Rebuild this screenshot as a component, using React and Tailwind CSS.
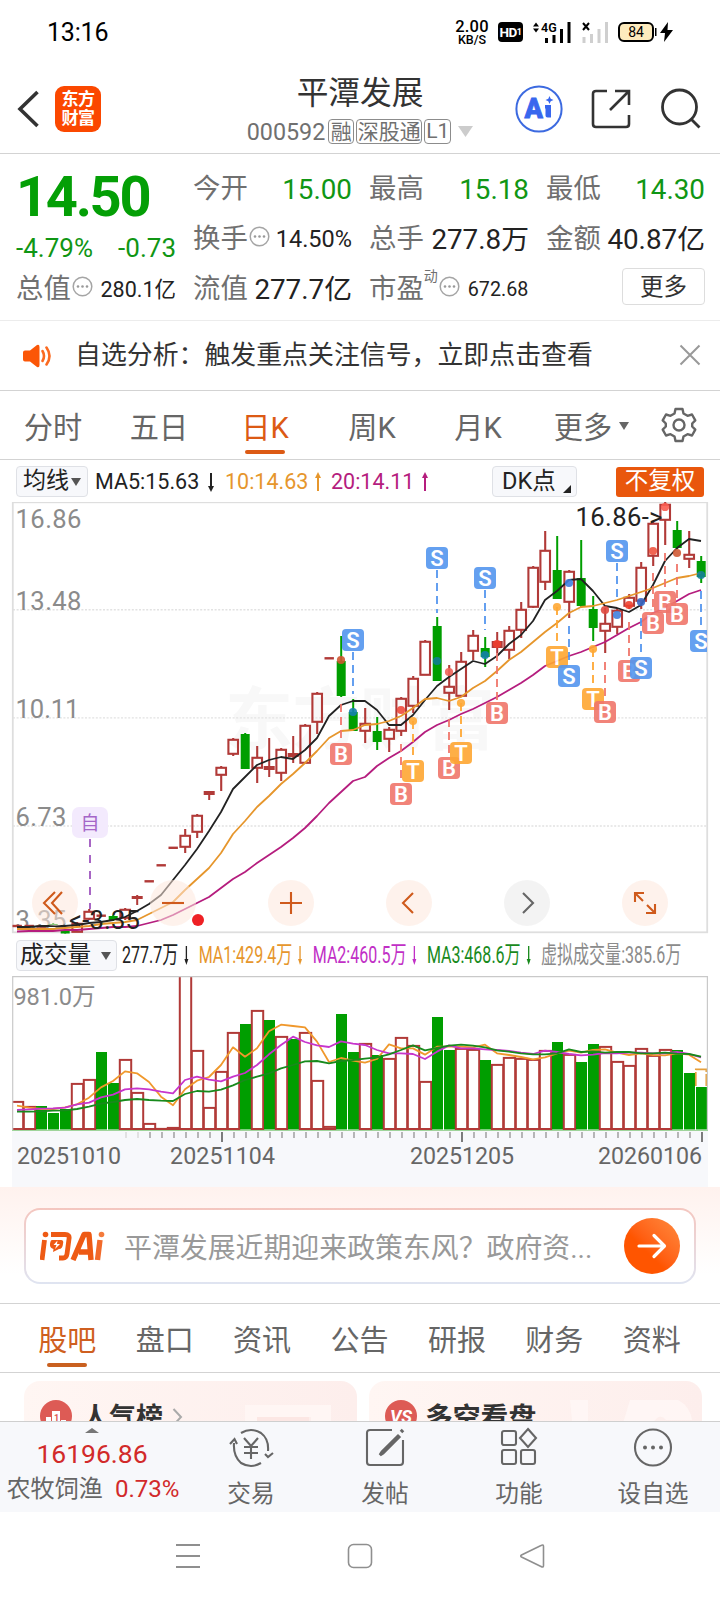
const FONT = "font-[Roboto,'Noto_Sans_CJK_SC',sans-serif]";

const UP = "#b13a38";
const DOWN = "#009e00";

// [kind, body top, body bottom, wick top, wick bottom]
// r: hollow red, f: filled red, g: green, d: flat dash
const CANDLES = [
  ["d", 926], ["d", 926], ["d", 926.5], ["g", 924, 927, 923, 927], ["g", 931, 933.5, 930, 933.5],
  ["r", 923, 932, 922, 932], ["r", 911, 919, 909, 920], ["d", 915.7], ["g", 916, 920, 915, 921], ["r", 909, 918, 908, 920],
  ["f", 896, 899, 895, 905], ["d", 881.3], ["d", 865.3], ["d", 847.8], ["r", 835, 847, 829, 853],
  ["r", 815, 832, 814, 838], ["f", 791, 795, 791, 800], ["r", 767, 775, 766, 791], ["r", 739, 754, 738, 756], ["g", 734, 769, 733, 769],
  ["r", 757, 768, 746, 783], ["f", 766, 770, 738, 777], ["r", 749, 773, 748, 781], ["f", 753, 757, 736, 763], ["r", 725, 763, 724, 763],
  ["r", 693, 722, 692, 734], ["d", 658.3], ["g", 661, 696, 636, 697], ["g", 712, 731, 699, 731], ["r", 723, 731, 708, 743],
  ["g", 731, 742, 717, 750], ["r", 729, 739, 727, 752], ["r", 698, 731, 697, 736], ["r", 678, 706, 676, 713], ["r", 641, 675, 640, 675],
  ["g", 626, 681, 617, 681], ["r", 686, 693, 665, 710], ["r", 661, 696, 652, 697], ["r", 635, 651, 630, 660], ["g", 648, 657, 637, 667],
  ["f", 641, 648, 632, 653], ["r", 630, 650, 626, 659], ["r", 609, 630, 602, 638], ["r", 567, 607, 566, 608], ["r", 550, 582, 531, 590],
  ["g", 570, 599, 536, 599], ["r", 571, 602, 570, 618], ["g", 578, 606, 540, 608], ["g", 609, 628, 596, 641], ["r", 623, 631, 608, 653],
  ["r", 610, 627, 609, 634], ["r", 597, 606, 594, 609], ["r", 567, 601, 562, 609], ["r", 523, 556, 522, 566], ["r", 504, 520, 502, 545],
  ["g", 530, 548, 521, 549], ["r", 554, 559, 531, 568], ["g", 561, 577, 556, 583],
];

const MA5 = [927, 927, 926, 926, 926, 925, 923, 922, 920, 917, 911, 904, 895, 880, 865, 849, 831, 812, 789, 777, 765, 760, 757, 759, 750, 738, 716, 705, 701, 701, 710, 725, 725, 715, 700, 686, 677, 669, 661, 664, 656, 644, 635, 621, 600, 591, 580, 579, 591, 606, 608, 612, 605, 585, 561, 548, 539, 541];
const MA10 = [929, 929, 929, 929, 928, 927, 926, 924, 923, 922, 920, 914, 908, 902, 890, 879, 868, 853, 834, 821, 807, 796, 784, 774, 763, 751, 738, 731, 730, 725, 724, 721, 716, 708, 699, 698, 701, 697, 688, 681, 671, 660, 652, 642, 632, 623, 613, 607, 606, 603, 600, 596, 592, 588, 583, 578, 576, 573];
const MA20 = [931.5, 931, 931, 931, 930, 930, 929, 928, 927, 927, 926, 923, 920, 915, 909, 903, 897, 888, 879, 872, 863, 855, 847, 838, 828, 816, 803, 792, 781, 777, 766, 758, 751, 742, 732, 725, 720, 714, 709, 703, 697, 690, 683, 675, 666, 661, 656, 652, 647, 642, 635, 628, 622, 613, 608, 601, 594, 590];

// [x, y, letter]
const BADGES = [
  [353, 640, "S"], [341, 754, "B"], [401, 794, "B"], [413, 771, "T"], [437, 558, "S"], [449, 768, "B"], [461, 753, "T"],
  [485, 578, "S"], [497, 713, "B"], [557, 657, "T"], [569, 676, "S"], [593, 699, "T"], [605, 712, "B"], [617, 551, "S"],
  [629, 671, "B"], [641, 668, "S"], [665, 602, "B"], [653, 623, "B"], [677, 614, "B"], [701, 641, "S"],
];
const BADGE_FILL = { S: "#5496ef", B: "#f0766b", T: "#fea733" };

// [x, y1, y2, letter]
const LINKS = [
  [353, 652, 694, "S"], [341, 704, 742, "B"], [401, 744, 782, "B"], [413, 721, 759, "T"], [437, 570, 613, "S"],
  [449, 719, 756, "B"], [461, 703, 742, "T"], [485, 590, 630, "S"], [497, 653, 701, "B"], [557, 607, 645, "T"],
  [569, 626, 664, "S"], [593, 649, 687, "T"], [605, 662, 700, "B"], [617, 563, 601, "S"], [629, 622, 660, "B"],
  [641, 618, 656, "S"], [653, 573, 611, "B"], [665, 553, 590, "B"], [677, 564, 602, "B"], [701, 591, 629, "S"],
];

const DOTS = [
  [341, 660, "#cf5630"], [353, 712, "#157fae"], [401, 710, "#f04a3c"], [413, 721, "#fea733"], [437, 661, "#0f7e92"],
  [449, 672, "#f0645a"], [461, 703, "#fea733"], [485, 655, "#1380a8"], [497, 644, "#f0402f"], [557, 607, "#fea733"],
  [569, 583, "#3f7fe0"], [593, 649, "#fea733"], [605, 610, "#e04a40"], [617, 615, "#4080dd"], [629, 605, "#f0402f"],
  [641, 602, "#3a68c8"], [653, 551, "#f0543f"], [665, 507, "#fb5c50"], [677, 553, "#d05a35"], [701, 575, "#157f98"],
];

// [colour, top of the bar]
const VOLUMES = [
  ["r", 1101], ["r", 1106], ["g", 1106], ["g", 1113], ["g", 1109], ["r", 1083], ["r", 1079], ["g", 1052], ["g", 1083], ["r", 1059],
  ["r", 1092], ["r", 1123], ["r", 1128], ["r", 1127], ["r", 960], ["r", 1050], ["r", 1107], ["r", 1071], ["r", 1032], ["g", 1024],
  ["r", 1010], ["g", 1020], ["r", 1036], ["g", 1039], ["r", 1032], ["r", 1080], ["r", 1126], ["g", 1014], ["g", 1052], ["r", 1043],
  ["g", 1055], ["r", 1058], ["r", 1037], ["r", 1045], ["r", 1081], ["g", 1017], ["g", 1050], ["r", 1048], ["r", 1049], ["g", 1060],
  ["r", 1064], ["r", 1057], ["r", 1058], ["r", 1059], ["r", 1050], ["g", 1042], ["r", 1054], ["g", 1062], ["g", 1044], ["r", 1046],
  ["r", 1061], ["r", 1065], ["r", 1048], ["r", 1055], ["r", 1049], ["g", 1050], ["g", 1073], ["g", 1087],
];
const VMA1 = [527, 533, 537, 537, 532, 523, 503, 472, 453, 424, 430, 456, 500, 526, 478, 452, 441, 405, 352, 380, 355, 304, 284, 288, 292, 335, 396, 384, 392, 398, 387, 343, 355, 355, 374, 350, 350, 350, 352, 344, 370, 375, 381, 388, 382, 370, 362, 368, 360, 358, 368, 375, 370, 375, 376, 370, 374, 397];
const VMA2 = [540, 538, 536, 535, 533, 523, 518, 502, 494, 478, 475, 478, 485, 490, 450, 440, 449, 454, 440, 429, 405, 373, 345, 320, 336, 346, 351, 334, 341, 345, 360, 370, 370, 372, 387, 365, 346, 355, 355, 358, 360, 363, 368, 372, 362, 366, 372, 376, 374, 369, 370, 368, 368, 370, 370, 366, 372, 382];
const VMA3 = [545, 545, 544, 542, 541, 537, 530, 521, 516, 510, 507, 510, 512, 513, 492, 483, 485, 479, 466, 450, 440, 430, 415, 405, 394, 393, 400, 393, 390, 386, 382, 373, 360, 346, 361, 354, 347, 344, 347, 352, 361, 365, 370, 373, 373, 370, 358, 366, 364, 368, 366, 366, 370, 370, 368, 371, 372, 380];

const xAt = (i) => 17 + i * 12;
const toPoints = (ys) => ys.map((y, i) => `${xAt(i)},${y}`).join(" ");
const toVolPoints = (ys) => toPoints(ys.map((y) => 930 + y / 3));

function Candle({ i, data }) {
  const [kind, top, bottom, high, low] = data;
  const x = xAt(i) + 0.2;
  if (kind === "d") return <rect x={x - 4.7} y={top - 1.2} width="9.4" height="2.4" fill={UP} />;
  const color = kind === "g" ? DOWN : UP;
  if (kind === "r") {
    return (
      <g stroke={color} strokeWidth="2.1" fill="none">
        <path d={`M${x} ${high}V${top}M${x} ${bottom}V${low}`} />
        <rect x={x - 4.8} y={top + 0.8} width="9.6" height={Math.max(bottom - top - 1, 2)} />
      </g>
    );
  }
  return (
    <g fill={color}>
      <rect x={x - 1} y={high} width="2" height={low - high} />
      <rect x={kind === "g" ? x - 4.5 : x - 5.5} y={top} width={kind === "g" ? 9 : 11} height={bottom - top} />
    </g>
  );
}

function PriceChart() {
  return (
    <svg className="block h-[432px] w-full" viewBox="0 502 720 432">
      <text x="225" y="744" textLength="270" fill="#f8f8f8" fontSize="68" fontWeight="700">东方财富</text>
      <g stroke="#e2e2e2" strokeWidth="1.4" strokeDasharray="2 1.6">
        <path d="M13 609.7H707M13 717.9H707M13 826H707" />
      </g>
      <rect x="12.8" y="502.3" width="694.4" height="430" fill="none" stroke="#dedede" strokeWidth="1.8" />
      <g fill="#8b8b8b" fontSize="25.6">
        <text x="15.5" y="528" textLength="66">16.86</text>
        <text x="15.5" y="610" textLength="66">13.48</text>
        <text x="15.5" y="718" textLength="64">10.11</text>
        <text x="15.5" y="826" textLength="51">6.73</text>
        <text x="15.5" y="928.5" textLength="51">3.35</text>
      </g>
      {CANDLES.map((c, i) => <Candle key={i} i={i} data={c} />)}
      <g fill="none" strokeWidth="1.8" strokeLinejoin="round">
        <polyline points={toPoints(MA5)} stroke="#222" />
        <polyline points={toPoints(MA10)} stroke="#e6962c" />
        <polyline points={toPoints(MA20)} stroke="#b51d7e" />
      </g>
      {LINKS.map(([x, y1, y2, l], i) => (
        <path key={i} d={`M${x} ${y1}V${y2}`} stroke={BADGE_FILL[l]} strokeWidth="1.8" strokeDasharray="8 5" />
      ))}
      {DOTS.map(([x, y, c], i) => <circle key={i} cx={x} cy={y} r="4.1" fill={c} opacity="0.9" />)}
      {BADGES.map(([x, y, l], i) => (
        <g key={i} opacity="0.9">
          <path
            d={x > 700 ? "M694 630H707V652H694Q690 652 690 648V634Q690 630 694 630Z" : `M${x - 7} ${y - 11}h14q4 0 4 4v14q0 4-4 4h-14q-4 0-4-4v-14q0-4 4-4Z`}
            fill={BADGE_FILL[l]}
          />
          <text x={x} y={y + 7.8} textAnchor="middle" fontSize="22" fontWeight="600" fill="#fff">{l}</text>
        </g>
      ))}
      <path d="M90 839V909" stroke="#a765c4" strokeWidth="2" strokeDasharray="8 8" />
      <rect x="72" y="807" width="36" height="31" rx="7" fill="#f3eafd" />
      <text x="90" y="830" textAnchor="middle" fontSize="19" fill="#a566c8">自</text>
      <g fill="#222" fontSize="25.6">
        <text x="69" y="928.5" textLength="71">&lt;-3.35</text>
        <text x="575.5" y="526" textLength="87">16.86-&gt;</text>
      </g>
      <circle cx="198" cy="920" r="6" fill="#ee2024" />
    </svg>
  );
}

function VolumeChart() {
  return (
    <svg className="block h-[155px] w-full" viewBox="0 976 720 155">
      <text x="13.5" y="1005" fontSize="23.6" fill="#8b8b8b" textLength="82">981.0万</text>
      {VOLUMES.map(([kind, top], i) =>
        kind === "g" ? (
          <rect key={i} x={xAt(i) - 5} y={top} width="11" height={1129.5 - top} fill={DOWN} />
        ) : (
          <rect key={i} x={xAt(i) - 5.2} y={top + 0.9} width="11.4" height={1129 - top - 0.9} fill="none" stroke={UP} strokeWidth="2" />
        )
      )}
      <path d="M695.8 1086V1069.3H706.3V1086" fill="none" stroke="#e6a03c" strokeWidth="1.7" strokeDasharray="14 2" />
      <g fill="none" strokeWidth="1.8" strokeLinejoin="round">
        <polyline points={toVolPoints(VMA1)} stroke="#f0982c" />
        <polyline points={toVolPoints(VMA2)} stroke="#c735cc" />
        <polyline points={toVolPoints(VMA3)} stroke="#188a1c" />
      </g>
      <rect x="0" y="970" width="12" height="165" fill="#fff" />
      <path d="M12.7 1130V976.6H707.4V1130" fill="none" stroke="#c9c9c9" strokeWidth="1.2" />
      <path d="M12 1130.5H708" stroke="#9fd49b" strokeWidth="1" />
    </svg>
  );
}

function TimeAxis() {
  const ticks = Array.from({ length: 49 }, (_, k) => 126 + k * 12);
  return (
    <svg className="block h-[56px] w-full bg-white" viewBox="0 1131 720 56">
      <rect x="12" y="1131" width="696" height="56" fill="#f7f8fb" />
      {ticks.map((x, k) => {
        const major = (k - 8) % 20 === 0;
        return <path key={x} d={`M${x} 1132V${major ? 1142 : 1138}`} stroke={major ? "#666" : k < 2 ? "#ddd" : "#aaa"} strokeWidth="1.7" />;
      })}
      <g fill="#666" fontSize="23.2">
        <text x="17" y="1164" textLength="104">20251010</text>
        <text x="170" y="1164" textLength="105">20251104</text>
        <text x="410" y="1164" textLength="104">20251205</text>
        <text x="598" y="1164" textLength="104">20260106</text>
      </g>
    </svg>
  );
}

function Arrow({ up, className }) {
  return (
    <svg className={className} width="8" height="20" viewBox="0 0 8 20" fill="none" stroke="currentColor" strokeWidth="2">
      <path d={up ? "M4 19V3" : "M4 1V17"} />
      <path d={up ? "M4 0L7 6H1Z" : "M4 20L7 14H1Z"} fill="currentColor" stroke="none" />
    </svg>
  );
}

function StatusBar() {
  return (
    <div className="flex h-16 items-center pl-[47px] text-black">
      <span className="w-[407px] pt-px text-[25px] tracking-[-0.2px]">13:16</span>
      <span className="flex w-[36px] flex-col items-center text-[16.5px] leading-[15px] font-medium">
        <span className="tracking-[0.2px]">2.00</span>
        <span className="text-[12.5px] leading-[11px]">KB/S</span>
      </span>
      <span className="ml-[8px] flex h-[20px] w-[25px] items-center justify-center rounded-[4px] bg-black text-[13.5px] font-bold tracking-[-0.5px] text-white">
        HD<span className="text-[9px] leading-none">1</span>
      </span>
      <svg className="ml-[10px]" width="38" height="22" viewBox="0 0 38 22">
        <path d="M0 5.5L3 1.5L6 5.5ZM0 7.5L3 11.5L6 7.5Z" />
        <path d="M13.5 22V17M21 22V14M28.5 22V8M36 22V1" stroke="#000" strokeWidth="3" />
        <text x="8" y="10.5" fontSize="12.5" fontWeight="600">4G</text>
      </svg>
      <svg className="ml-[11px]" width="27" height="22" viewBox="0 0 27 22">
        <path d="M1 2L7 9M7 2L1 9" stroke="#000" strokeWidth="2" />
        <path d="M2 22V16M9.5 22V13M17 22V8M24.5 22V1" stroke="#cfcfcf" strokeWidth="3" />
      </svg>
      <span className="ml-[9px] flex h-[20px] w-[36px] items-center justify-center rounded-[6px] border-2 border-black bg-[#fdebbd] text-[14px]">84</span>
      <svg width="22" height="20" viewBox="0 0 22 20">
        <path d="M1 6h1.5v8H1zM14 0L6 11h5l-1 9L19 8h-5.5z" />
      </svg>
    </div>
  );
}

function Header() {
  return (
    <div className="flex h-[90px] border-b border-[#d3d3d3] text-[#333]">
      <div className="flex w-[238px] items-center pl-[17px]">
        <svg width="22" height="38" viewBox="0 0 22 38" fill="none" stroke="#333" strokeWidth="3.6">
          <path d="M20.5 2L3 19L20.5 36" />
        </svg>
        <div className="ml-[16px] flex h-[46px] w-[46px] flex-col items-center justify-center rounded-[9px] bg-[#fb4800] text-[17px] leading-[19px] font-bold tracking-[-0.5px] text-white">
          <span>东方</span>
          <span>财富</span>
        </div>
      </div>
      <div className="flex w-[244px] flex-col items-center">
        <h1 className="mt-[9px] text-[31.7px] leading-[42px]">平潭发展</h1>
        <div className="mt-[3px] flex items-center gap-[2px] text-[21px] leading-[25px] text-[#707070]">
          <span className="mt-[2px] mr-px text-[23.3px]">000592</span>
          <span className="flex h-[25px] w-[26px] items-center justify-center rounded-[4px] border border-[#8c8c8c] pt-[2px]">融</span>
          <span className="flex h-[25px] w-[66px] items-center justify-center rounded-[4px] border border-[#8c8c8c] pt-[2px]">深股通</span>
          <span className="flex h-[25px] w-[27px] items-center justify-center rounded-[4px] border border-[#8c8c8c]">L1</span>
          <svg className="ml-[5px]" width="15" height="11" viewBox="0 0 15 11"><path d="M0 0H15L7.5 11Z" fill="#ccc" /></svg>
        </div>
      </div>
      <div className="flex flex-1 items-center pl-[33px]">
        <svg width="48" height="48" viewBox="0 0 48 48">
          <circle cx="24" cy="24" r="22.6" fill="#fff" stroke="#3c6ae0" strokeWidth="2" />
          <text x="9.5" y="33" fontSize="27" fontWeight="900" fill="#3867ee" stroke="#3867ee" strokeWidth="0.8">A</text>
          <path d="M30 20H36V32.5H32.5Q30.5 32.5 30.5 30.5V23.5H30Z" fill="#3867ee" />
          <path d="M34.5 11L35.7 13.8L38.5 15L35.7 16.2L34.5 19L33.3 16.2L30.5 15L33.3 13.8Z" fill="#3867ee" />
        </svg>
        <svg className="ml-[28px]" width="40" height="40" viewBox="0 0 40 40" fill="none" stroke="#333" strokeWidth="2.6">
          <path d="M16 2H5Q2 2 2 5V35Q2 38 5 38H35Q38 38 38 35V26" />
          <path d="M24 2H38V16M38 2L19 21" />
        </svg>
        <svg className="ml-[29px]" width="42" height="42" viewBox="0 0 42 42" fill="none" stroke="#333" strokeWidth="2.8">
          <circle cx="19.5" cy="19" r="17" />
          <path d="M31 31L39.5 39.5" />
        </svg>
      </div>
    </div>
  );
}

function Info() {
  return (
    <svg className="mx-px mb-[8px] shrink-0" width="21" height="21" viewBox="0 0 21 21">
      <circle cx="10.5" cy="10.5" r="9.3" fill="none" stroke="#a5a5a5" strokeWidth="1.5" />
      <g fill="#999"><circle cx="6" cy="10.5" r="1.3" /><circle cx="10.5" cy="10.5" r="1.3" /><circle cx="15" cy="10.5" r="1.3" /></g>
    </svg>
  );
}

function Stat({ label, value, info, size = "text-[27.8px]", color = "text-[#222]" }) {
  return (
    <div className="flex h-[50px] items-center whitespace-nowrap">
      <span className="text-[27.4px] text-[#707070]">{label}</span>
      {info && <Info />}
      <span className={`ml-auto ${size} ${color}`}>{value}</span>
    </div>
  );
}

function Quote() {
  const green = "text-[#109614]";
  return (
    <div className="grid h-[167px] grid-cols-[160px_159px_160px_159px] gap-x-[17px] border-b border-[#ececec] pt-[11px] pl-[16px]">
      <div className="flex flex-col">
        <div className="h-[66px] text-[56px] leading-[64px] font-bold tracking-[-2.3px] text-[#049f06]">14.50</div>
        <div className={`flex h-[34px] items-center justify-between text-[26px] ${green}`}>
          <span>-4.79%</span>
          <span>-0.73</span>
        </div>
        <Stat label="总值" value="280.1亿" info size="text-[21.5px]" />
      </div>
      <div>
        <Stat label="今开" value="15.00" color={green} />
        <Stat label="换手" value="14.50%" info size="text-[23.5px]" />
        <Stat label="流值" value="277.7亿" />
      </div>
      <div>
        <Stat label="最高" value="15.18" color={green} />
        <Stat label="总手" value="277.8万" />
        <div className="flex h-[50px] items-center whitespace-nowrap">
          <span className="text-[27.4px] text-[#707070]">市盈</span>
          <span className="mb-[28px] text-[14px] text-[#707070]">动</span>
          <Info />
          <span className="ml-[7px] text-[19.7px] text-[#222]">672.68</span>
        </div>
      </div>
      <div>
        <Stat label="最低" value="14.30" color={green} />
        <Stat label="金额" value="40.87亿" />
        <div className="mt-[3px] ml-auto flex h-[37px] w-[83px] items-center justify-center rounded-[4px] border border-[#ddd] pt-[3px] text-[23.5px] text-[#333]">更多</div>
      </div>
    </div>
  );
}

function Notice() {
  return (
    <div className="flex h-[70px] items-center border-b border-[#d3d3d3] pl-[22px] text-[25.9px] text-[#333]">
      <svg width="31" height="24" viewBox="0 0 31 24">
        <path d="M3 6.5H8L15 1Q17.5 0 17.5 3V21Q17.5 24 15 23L8 17.5H3Q1 17.5 1 15.5V8.5Q1 6.5 3 6.5Z" fill="#fb5607" />
        <path d="M20.5 7Q23.5 12 20.5 17M24.5 3.5Q30.5 12 24.5 20.5" fill="none" stroke="#fb6a20" strokeWidth="2.6" strokeLinecap="round" />
      </svg>
      <span className="ml-[22px]">自选分析：触发重点关注信号，立即点击查看</span>
      <svg className="mr-[19px] mb-[2px] ml-auto" width="22" height="22" viewBox="0 0 22 22" stroke="#999" strokeWidth="2"><path d="M1.5 1.5L20.5 20.5M20.5 1.5L1.5 20.5" /></svg>
    </div>
  );
}

function PeriodTabs() {
  const tabs = ["分时", "五日", "日K", "周K", "月K", "更多"];
  return (
    <div className="flex h-[69px] border-b border-[#d3d3d3] text-[29.2px] text-[#666]">
      {tabs.map((t) => (
        <div key={t} className="relative flex w-[106px] items-center justify-center pt-[7px]">
          <span className={t === "日K" ? "text-[#dc5a14]" : t === "月K" || t === "周K" ? "pl-[2px]" : undefined}>{t}</span>
          {t === "日K" && <span className="absolute bottom-[5px] h-[4px] w-[40px] rounded-full bg-[#dc5a14]" />}
          {t === "更多" && <span className="absolute left-[89px] mb-[6px] border-x-[5px] border-t-[8px] border-x-transparent border-t-[#666]" />}
        </div>
      ))}
      <svg className="mt-[16px] ml-[25px]" width="36" height="36" viewBox="0 0 36 36" fill="none" stroke="#666" strokeWidth="2.4" strokeLinejoin="round">
        <path d="M14.5 2H21.5L22.5 6.5L26.5 8.8L31 7.5L34.3 13.3L31.2 16.5V19.5L34.3 22.7L31 28.5L26.5 27.2L22.5 29.5L21.5 34H14.5L13.5 29.5L9.5 27.2L5 28.5L1.7 22.7L4.8 19.5V16.5L1.7 13.3L5 7.5L9.5 8.8L13.5 6.5Z" />
        <circle cx="18" cy="18" r="5.5" />
      </svg>
    </div>
  );
}

function AverageRow() {
  return (
    <div className="flex h-[43px] items-center pl-[16px] text-[21.5px] text-[#222]">
      <span className="flex h-[31px] w-[72px] items-center justify-center gap-[2px] rounded-[4px] border border-[#dfe1e6] bg-[#f7f8fb] text-[23px]">
        均线<span className="border-x-[5px] border-t-[8px] border-x-transparent border-t-[#555]" />
      </span>
      <span className="ml-[7px] w-[112px] pt-px">MA5:15.63</span>
      <Arrow />
      <span className="ml-[10px] w-[89px] pt-px text-[#e6962c]">10:14.63</span>
      <Arrow up className="text-[#e6962c]" />
      <span className="ml-[9px] w-[90px] pt-px text-[#b51d7e]">20:14.11</span>
      <Arrow up className="text-[#b51d7e]" />
      <span className="ml-[63px] flex h-[31px] w-[85px] items-center rounded-[4px] border border-[#dfe1e6] bg-[#f7f8fb] pl-[9px] text-[23.5px]">
        DK点
        <svg className="mt-[14px] ml-[7px]" width="8" height="8" viewBox="0 0 8 8"><path d="M8 0V8H0Z" fill="#222" /></svg>
      </span>
      <span className="ml-[39px] flex h-[30px] w-[88px] items-center justify-center rounded-[3px] bg-[#e9570d] pt-px text-[23.5px] text-white">不复权</span>
    </div>
  );
}

function ChartButtons() {
  const icons = [
    "M16 -11L6 0L16 11M9 -11L-2 0L9 11",
    "M-11 0H11",
    "M-11 0H11M0 -11V11",
    "M4 -10L-6 0L4 10",
    "M-4 -10L6 0L-4 10",
    "M-10 -1V-10H-1M-10 -10L-2 -2M10 1V10H1M10 10L2 2",
  ];
  return (
    <div className="absolute top-[378px] left-[32px] flex gap-[72px]">
      {icons.map((d, i) => (
        <svg key={d} width="46" height="46" viewBox="-23 -23 46 46" fill="none" strokeWidth="2.1">
          <circle r="23" fill={i === 4 ? "#e9e9e9" : "#fde7dc"} opacity="0.55" />
          <path d={d} stroke={i === 4 ? "#666" : "#cf5a1c"} transform={i === 0 ? "translate(-9 0)" : undefined} />
        </svg>
      ))}
    </div>
  );
}

function VolumeRow() {
  const items = [
    ["277.7万", "text-[#222]"],
    ["MA1:429.4万", "text-[#e6962c]"],
    ["MA2:460.5万", "text-[#c12fc6]"],
    ["MA3:468.6万", "text-[#188a1c]"],
  ];
  return (
    <div className="flex h-[42px] items-center pl-[16px]">
      <span className="flex h-[31px] w-[101px] shrink-0 items-center gap-[10px] rounded-[4px] border border-[#dfe1e6] bg-[#f7f8fb] pt-[2px] pl-[3px] text-[23.7px] text-[#222]">
        成交量<span className="border-x-[5px] border-t-[8px] border-x-transparent border-t-[#555]" />
      </span>
      <div className="ml-[5px] flex origin-left scale-x-[0.657] items-center pt-px text-[24.4px] whitespace-nowrap">
        {items.map(([text, color]) => (
          <span key={text} className={`mr-[15px] flex items-center gap-[8px] ${color}`}>
            {text}
            <Arrow />
          </span>
        ))}
        <span className="text-[#8b8b8b]">虚拟成交量:385.6万</span>
      </div>
    </div>
  );
}

function AskBar() {
  return (
    <div className="flex h-[117px] items-start border-b border-[#d3d3d3] bg-linear-to-b from-[#fff2ee] to-white to-75% px-[24px] pt-[21px]">
      <div className="flex-1 rounded-[16px] bg-linear-to-b from-[#f4c6bf] to-[#dfe4f1] p-[2px]">
        <div className="flex h-[72px] items-center rounded-[14px] bg-white pl-[14px]">
          <svg width="66" height="30" viewBox="0 0 66 30" fill="none" stroke="#ee5a14" strokeWidth="5.4" strokeLinejoin="round">
            <circle cx="5.5" cy="3.5" r="2.8" fill="#ee5a14" stroke="none" />
            <path d="M4.5 9L2 29M11 3.5H25Q30 3.5 29 8L27 23Q26.4 27 23 27H19" strokeWidth="4.8" />
            <path d="M12 9H21Q24 9 23 13Q22.5 18 19 18L13 21L13.5 18Q9.5 17 10 13Q10.5 9 12 9Z" fill="#ee5a14" stroke="none" />
            <path d="M17.5 9.5L13.5 14H16.5L15 18L20 13H17Z" fill="#fff" stroke="none" />
            <path d="M33 29L44 3.5H49L51 29M39 21H49" />
            <circle cx="61.5" cy="3.5" r="2.8" fill="#f47b3c" stroke="none" />
            <path d="M60 9L57.5 29" stroke="#f26a2a" />
          </svg>
          <span className="ml-[18px] pt-[6px] text-[27.9px] text-[#999]">平潭发展近期迎来政策东风？政府资...</span>
          <span className="mr-[14px] ml-auto flex size-[56px] items-center justify-center rounded-full bg-linear-to-bl from-[#ff8a3c] to-[#ff5500] to-60%">
            <svg width="30" height="26" viewBox="0 0 30 26" fill="none" stroke="#fff" strokeWidth="3.2" strokeLinecap="round" strokeLinejoin="round"><path d="M2 13H27M17 2.5L27.5 13L17 23.5" /></svg>
          </span>
        </div>
      </div>
    </div>
  );
}

function InfoTabs() {
  const tabs = ["股吧", "盘口", "资讯", "公告", "研报", "财务", "资料"];
  return (
    <div className="grid h-[69px] grid-cols-7 border-b border-[#d3d3d3] px-[19px] text-[29px] text-[#666]">
      {tabs.map((t, i) => (
        <div key={t} className="relative flex items-center justify-center pt-[8px] pr-px">
          <span className={i === 0 ? "text-[#cf5f20]" : undefined}>{t}</span>
          {i === 0 && <span className="absolute bottom-[5px] h-[4px] w-[40px] rounded-full bg-[#c9601f]" />}
        </div>
      ))}
    </div>
  );
}

function Cards() {
  return (
    <div className="flex h-[48px] gap-[12px] overflow-hidden pt-[8px] pl-[24px]">
      <div className="flex h-[76px] w-[333px] shrink-0 items-start rounded-[16px] bg-linear-to-r from-[#fff6f3] to-[#fdeeec] pt-[19px] pl-[16px]">
        <svg width="32" height="32" viewBox="0 0 32 32">
          <circle cx="16" cy="16" r="16" fill="#dd5b55" />
          <path d="M6 17H11V27H6ZM12 11H20V27H12ZM21 20H26V27H21Z" fill="#fff" />
          <text x="14" y="21" fontSize="9" fontWeight="700" fill="#dd5b55">1</text>
        </svg>
        <span className="ml-[10px] text-[27px] leading-[36px] font-bold text-[#333]">人气榜</span>
        <svg className="mt-[8px] ml-[9px]" width="11" height="18" viewBox="0 0 11 18" fill="none" stroke="#aaa" strokeWidth="2"><path d="M1.5 1L9 9L1.5 17" /></svg>
        <svg className="ml-[62px]" width="90" height="40" viewBox="0 0 90 40"><path d="M0 5H86V40H66V17H20V40H0Z" fill="#fff6f4" /><path d="M12 17H64V40H12Z" fill="#fce7e4" /></svg>
      </div>
      <div className="flex h-[76px] w-[333px] shrink-0 items-start rounded-[16px] bg-linear-to-r from-[#fff6f3] to-[#fdeeec] pt-[19px] pl-[16px]">
        <svg width="32" height="32" viewBox="0 0 32 32">
          <circle cx="16" cy="16" r="16" fill="#dd5b55" />
          <text x="5" y="23" fontSize="18" fontWeight="700" fontStyle="italic" fill="#fff" textLength="22">VS</text>
        </svg>
        <span className="ml-[8px] text-[27.8px] leading-[36px] font-bold text-[#333]">多空看盘</span>
        <svg className="ml-[34px]" width="126" height="40" viewBox="0 0 126 40"><path d="M0 0H18V40H4ZM48 40L60 0H108Q120 6 122 20H96Q86 8 76 40Z" fill="#fff7f6" opacity="0.8" /></svg>
      </div>
    </div>
  );
}

function BottomBar() {
  const actions = [
    ["交易", <g key="a"><path d="M10 5Q20 -1 30 5Q38 11 37 23M30 35Q20 41 10 35Q2 28 3 15M-1 16L3.5 11L6 16M34 26L37 29L42 25" /><path d="M13 10L20 18L27 10M13 19H27M13 25H27M20 18V31" /></g>],
    ["发帖", <g key="b"><path d="M27 2H5Q2 2 2 5V34Q2 37 5 37H35Q38 37 38 34V12" /><path d="M33 8L17 24L15 27L18 25L34 9Z" strokeWidth="3" /><path d="M36 4L38 2" strokeWidth="3.5" /></g>],
    ["功能", <g key="c"><rect x="3" y="3" width="14" height="14" rx="2" /><rect x="3" y="22" width="14" height="14" rx="2" /><rect x="22" y="22" width="14" height="14" rx="2" /><path d="M29 1L37 10L29 19L21 10Z" /></g>],
    ["设自选", <g key="d"><circle cx="20" cy="19.5" r="18" /><g fill="#666" stroke="none"><circle cx="12" cy="19.5" r="2" /><circle cx="20" cy="19.5" r="2" /><circle cx="28" cy="19.5" r="2" /></g></g>],
  ];
  return (
    <div className="flex h-[91px] border-t border-[#cfcfcf] bg-[#f7f8fb] text-[23.7px] text-[#666]">
      <div className="flex w-[184px] flex-col items-center pt-[6px]">
        <span className="border-x-[7px] border-b-[5px] border-x-transparent border-b-[#777]" />
        <span className="mt-[4px] text-[26.5px] leading-[34px] text-[#d22a2a]">16196.86</span>
        <span className="flex gap-[12px] pl-[2px] text-[24.1px] leading-[36px]">农牧饲渔<span className="text-[#d22a2a]">0.73%</span></span>
      </div>
      {actions.map(([label, icon]) => (
        <div key={label} className="flex w-[134px] flex-col items-center pt-[6px]">
          <svg className="overflow-visible" width="40" height="40" viewBox="0 0 40 40" fill="none" stroke="#666" strokeWidth="2.1">{icon}</svg>
          <span className="mt-[8px] leading-[36px]">{label}</span>
        </div>
      ))}
    </div>
  );
}

function SystemNav() {
  return (
    <div className="flex h-[88px] items-center justify-center gap-[146px] bg-white">
      <svg width="26" height="26" viewBox="0 0 26 26" stroke="#8f8f8f" strokeWidth="1.8"><path d="M1 2H25M1 13H25M1 24H25" /></svg>
      <svg width="26" height="26" viewBox="0 0 26 26" fill="none" stroke="#8f8f8f" strokeWidth="1.6"><rect x="1.5" y="1.5" width="23" height="23" rx="5" /></svg>
      <svg width="26" height="26" viewBox="0 0 26 26" fill="none" stroke="#8f8f8f" strokeWidth="1.6" strokeLinejoin="round"><path d="M24.5 3.5V22.5Q24.5 25 22 23.5L2.5 14Q1 13 2.5 12L22 2.5Q24.5 1 24.5 3.5Z" /></svg>
    </div>
  );
}

export default function App() {
  return (
    <div className={`h-[1600px] w-[720px] overflow-hidden bg-white ${FONT}`}>
      <StatusBar />
      <Header />
      <Quote />
      <Notice />
      <PeriodTabs />
      <AverageRow />
      <div className="relative -mt-px">
        <PriceChart />
        <ChartButtons />
      </div>
      <VolumeRow />
      <VolumeChart />
      <TimeAxis />
      <AskBar />
      <InfoTabs />
      <Cards />
      <BottomBar />
      <SystemNav />
    </div>
  );
}
